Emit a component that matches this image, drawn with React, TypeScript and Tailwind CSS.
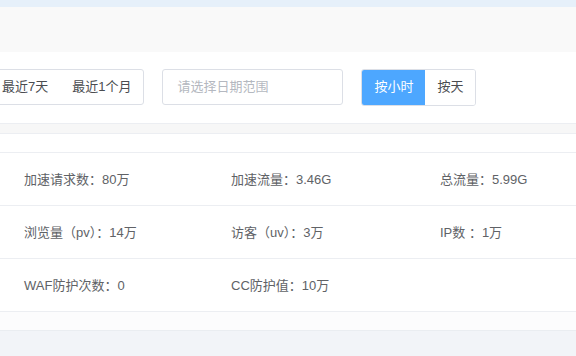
import React from "react";

const font = { fontFamily: '"Liberation Sans", "Noto Sans CJK SC", sans-serif' };

function Cell({ children }: { children?: React.ReactNode }) {
  return <div className="flex items-center h-full pt-[2px]">{children}</div>;
}

export default function App() {
  const rows: string[][] = [
    ["加速请求数：80万", "加速流量：3.46G", "总流量：5.99G"],
    ["浏览量（pv）：14万", "访客（uv）：3万", "IP数 ：1万"],
    ["WAF防护次数：0", "CC防护值：10万", ""],
  ];
  return (
    <div className="w-[576px] h-[356px] overflow-hidden bg-white text-[13px] text-[#606266]" style={font}>
      <div className="h-[7px] bg-[#e6f0fa]" />
      <div className="h-[45px] bg-[#f9f9f9]" />
      <div className="h-[71px] bg-white flex items-center">
        <div className="flex items-center ml-[-12px] mt-[-1px]">
          <div className="flex h-[36px] border border-[#dcdfe6] rounded-[3px] bg-white text-[#4a4c50]">
            <div className="flex items-center pl-[13px] pr-[12px]">最近7天</div>
            <div className="flex items-center pl-[12px] pr-[12px]">最近1个月</div>
          </div>
          <div className="flex items-center h-[36px] w-[181px] ml-[18px] border border-[#dcdfe6] rounded-[3px] pl-[14px] text-[#b4b8c0]">
            请选择日期范围
          </div>
          <div className="flex h-[37px] ml-[18px] border border-[#dcdfe6] rounded-[3px] overflow-hidden">
            <div className="flex items-center px-[12px] bg-[#4da7ff] text-white">按小时</div>
            <div className="flex items-center pl-[12px] pr-[11px] bg-white text-[#4a4c50]">按天</div>
          </div>
        </div>
      </div>
      <div className="h-[10px] bg-[#f7f7f7] border-t border-[#eceef2]" />
      <div className="h-[20px] bg-white border-t border-[#eceef2] border-b" />
      {rows.map((r, i) => (
        <div key={i} className="h-[53px] grid grid-cols-[207px_209px_1fr] pl-6 border-b border-[#eceef2]">
          {r.map((c, j) => (
            <Cell key={j}>{c}</Cell>
          ))}
        </div>
      ))}
      <div className="h-[19px] bg-[#fcfcfd] border-b border-[#eaedf1]" />
      <div className="h-[26px] bg-[#f2f4f8]" />
    </div>
  );
}
